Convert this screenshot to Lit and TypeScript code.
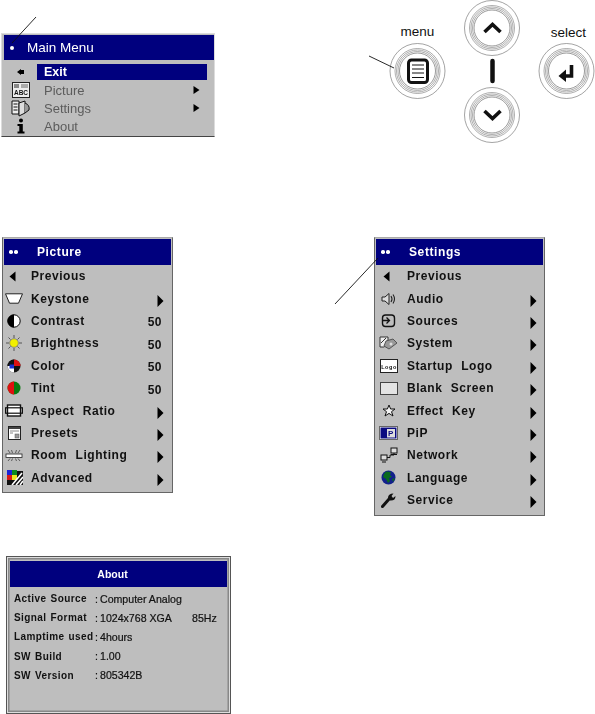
import { LitElement, html, css, svg } from "lit";
import { customElement } from "lit/decorators.js";

const ico = (w: number, h: number, body: unknown) =>
  html`<svg width=${w} height=${h} viewBox="0 0 ${w} ${h}">${body}</svg>`;

const icons: Record<string, unknown> = {
  back: ico(11, 11, svg`<path d="M6.500 .5V10.500L.5 5.500Z" fill="#000"/>`),
  backSmall: ico(8, 8, svg`<path d="M7 2V6H4V7L0 4L4 1V2Z" fill="#000"/>`),
  abc: ico(18, 16, svg`<rect x=".5" y=".5" width="17" height="15" fill="#eee" stroke="#222"/><rect x="2" y="2" width="5" height="4" fill="#888"/><rect x="9" y="2" width="7" height="4" fill="#aaa"/><text x="9" y="13" font-size="6.5" font-weight="700" text-anchor="middle" font-family="Liberation Sans" fill="#111">ABC</text>`),
  book: ico(20, 17, svg`<path d="M1 1H8V14H1Z" fill="#eee" stroke="#111"/><path d="M2.5 4H6.5M2.5 7H6.5M2.5 10H6.5" stroke="#111"/><path d="M8 3L14 1V13L8 16Z" fill="#ddd" stroke="#111"/><path d="M14 3Q19 5 18 10L14 13" fill="#999" stroke="#111"/>`),
  info: ico(10, 16, svg`<circle cx="5" cy="2.5" r="2" fill="#000"/><path d="M1.5 6H6.8V13.5H8.5V15.5H1.5V13.5H3.3V8H1.5Z" fill="#000"/>`),
  keystone: ico(18, 11, svg`<path d="M.5 .8H17.500L13.500 10.200H4.500Z" fill="#fff" stroke="#222"/>`),
  contrast: ico(14, 14, svg`<circle cx="7" cy="7" r="6.2" fill="#fff" stroke="#000"/><path d="M7 .5A6.5 6.5 0 0 0 7 13.5Z" fill="#000"/>`),
  bright: ico(18, 18, svg`<path d="M9 1V4M9 14V17M1 9H4M14 9H17M3.5 3.5L5.5 5.5M12.5 12.5L14.5 14.5M14.5 3.5L12.5 5.5M5.5 12.5L3.5 14.5" stroke="#555"/><circle cx="9" cy="9" r="4.3" fill="#f2f000" stroke="#666" stroke-width=".6"/>`),
  color: ico(14, 14, svg`<circle cx="7" cy="7" r="6.5" fill="#111"/><path d="M7 7V.5A6.5 6.5 0 0 1 13.5 7Z" fill="#d11"/><path d="M7 7H.5A6.5 6.5 0 0 1 7 .5Z" fill="#111"/><path d="M7 7V13.5A6.5 6.5 0 0 1 .5 7Z" fill="#fff"/><rect x="2.5" y="5.5" width="4.5" height="4" fill="#1a2fd0"/>`),
  tint: ico(14, 14, svg`<circle cx="7" cy="7" r="6.5" fill="#0a7a10"/><path d="M7 .5A6.5 6.5 0 0 0 7 13.5Z" fill="#e01010"/>`),
  aspect: ico(18, 13, svg`<rect x="2.5" y="1" width="13" height="11" fill="#fff" stroke="#111" stroke-width="1.4"/><rect x=".5" y="3.8" width="17" height="5.4" fill="none" stroke="#111" stroke-width="1.2"/>`),
  presets: ico(13, 14, svg`<rect x=".5" y=".5" width="12" height="13" fill="#fff" stroke="#222"/><rect x="1" y="1" width="11" height="2" fill="#444"/><path d="M2 5H11M2 7H5" stroke="#888"/><rect x="7" y="8" width="4" height="4" fill="#999" stroke="#555" stroke-width=".5"/>`),
  room: ico(18, 13, svg`<path d="M3 1L5 4M6.5 1L7.5 4M11.5 1L10.5 4M15 1L13 4M3 12L5 9.5M6.5 12L7.5 9.5M11.5 12L10.5 9.5M15 12L13 9.5" stroke="#444" stroke-width=".8"/><rect x="1" y="5" width="16" height="3.5" fill="#fff" stroke="#222" stroke-width=".8"/>`),
  advanced: ico(17, 15, svg`<rect width="5" height="5" x="1" y="0" fill="#1a22d8"/><rect width="5" height="5" x="6" y="0" fill="#0a8a20"/><rect width="5" height="5" x="1" y="5" fill="#d81818"/><rect width="5" height="5" x="6" y="5" fill="#ece820"/><rect x="11" y="1" width="6" height="14" fill="#111"/><rect x="1" y="10" width="16" height="5" fill="#111"/><path d="M6 15L16 3M10 15L17 7M14 15L17 11" stroke="#fff" stroke-width="1.6"/>`),
  audio: ico(16, 14, svg`<path d="M1 5H4L8 1.5V12.5L4 9H1Z" fill="#ddd" stroke="#222"/><path d="M10 4Q12 7 10 10M12 2.5Q15 7 12 11.500" fill="none" stroke="#222" stroke-width="1.1"/>`),
  sources: ico(15, 15, svg`<rect x="1.500" y="2" width="12" height="11.500" rx="3" fill="none" stroke="#111" stroke-width="1.4"/><path d="M1 7.500H8M5.500 4.500L8.500 7.500L5.500 10.500" fill="none" stroke="#111" stroke-width="1.3"/>`),
  system: ico(19, 14, svg`<path d="M1 1H9V8L5 11H1Z" fill="#eee" stroke="#333"/><path d="M2 7L7 2" stroke="#333"/><path d="M7 5L14 3L18 7L10 13L5 10Z" fill="#999" stroke="#555"/><circle cx="12" cy="8" r="1.500" fill="#ddd"/>`),
  logo: ico(18, 14, svg`<rect x=".5" y=".5" width="17" height="13" fill="#fff" stroke="#222"/><text x="9" y="9.500" font-size="5.500" text-anchor="middle" font-family="Liberation Sans" fill="#111">Logo</text>`),
  blank: ico(18, 13, svg`<rect x=".5" y=".5" width="17" height="12" fill="#e4e4e4" stroke="#444"/>`),
  star: ico(14, 13, svg`<path d="M7 1L8.600 5H13L9.500 7.700L11 12L7 9.400L3 12L4.500 7.700L1 5H5.400Z" fill="#f4f4f4" stroke="#111"/>`),
  pip: ico(19, 14, svg`<rect x=".5" y=".5" width="18" height="13" fill="#fff" stroke="#666"/><rect x="1.500" y="1.500" width="16" height="11" fill="#0a0a80"/><rect x="8" y="3" width="8" height="8.500" fill="#ddd"/><text x="12" y="10.300" font-size="8" font-weight="700" text-anchor="middle" font-family="Liberation Sans" fill="#0a0a80">P</text>`),
  net: ico(18, 16, svg`<rect x="1" y="8" width="6" height="5" fill="#ddd" stroke="#111"/><rect x="11" y="1" width="6" height="5" fill="#ddd" stroke="#111"/><path d="M7 10.500H10V8H14V6M2 15H6" fill="none" stroke="#111"/><path d="M11 7.500H17" stroke="#111"/>`),
  globe: ico(15, 15, svg`<circle cx="7.500" cy="7.500" r="7" fill="#12208c"/><path d="M5 1.500L10 2L9 5L11 7L8 8L9 11L7 13L5 9L2 7L3 4Z" fill="#0a6a20"/><path d="M11 9L14 8L12 12Z" fill="#0a6a20"/>`),
  wrench: ico(16, 16, svg`<path d="M1.500 14.500L8.500 6.500" stroke="#111" stroke-width="3" stroke-linecap="round"/><path d="M7 6Q7 1.500 12.500 1.500L10.500 4L12 6L14.500 4Q14.500 9 9 8.500Z" fill="#111"/>`),
};

type Row = { i: string; t: string; v?: string; a?: boolean };

const picture: Row[] = [
  { i: "back", t: "Previous" },
  { i: "keystone", t: "Keystone", a: true },
  { i: "contrast", t: "Contrast", v: "50" },
  { i: "bright", t: "Brightness", v: "50" },
  { i: "color", t: "Color", v: "50" },
  { i: "tint", t: "Tint", v: "50" },
  { i: "aspect", t: "Aspect Ratio", a: true },
  { i: "presets", t: "Presets", a: true },
  { i: "room", t: "Room Lighting", a: true },
  { i: "advanced", t: "Advanced", a: true },
];
const settings: Row[] = [
  { i: "back", t: "Previous" },
  { i: "audio", t: "Audio", a: true },
  { i: "sources", t: "Sources", a: true },
  { i: "system", t: "System", a: true },
  { i: "logo", t: "Startup Logo", a: true },
  { i: "blank", t: "Blank Screen", a: true },
  { i: "star", t: "Effect Key", a: true },
  { i: "pip", t: "PiP", a: true },
  { i: "net", t: "Network", a: true },
  { i: "globe", t: "Language", a: true },
  { i: "wrench", t: "Service", a: true },
];
const mainRows: Row[] = [
  { i: "backSmall", t: "Exit" },
  { i: "abc", t: "Picture", a: true },
  { i: "book", t: "Settings", a: true },
  { i: "info", t: "About" },
];
const about = [
  ["Active Source", "Computer Analog", ""],
  ["Signal Format", "1024x768 XGA", "85Hz"],
  ["Lamptime used", "4hours", ""],
  ["SW Build", "1.00", ""],
  ["SW Version", "805342B", ""],
];

const ring = (cx: number, cy: number) => svg`
  <circle cx=${cx} cy=${cy} r="27.500" fill="#fff" stroke="#666" stroke-width=".6"/>
  <circle cx=${cx} cy=${cy} r="22.500" fill="none" stroke="#777" stroke-width=".6"/>
  <circle cx=${cx} cy=${cy} r="21" fill="none" stroke="#777" stroke-width=".6"/>
  <circle cx=${cx} cy=${cy} r="19.500" fill="none" stroke="#777" stroke-width=".6"/>
  <circle cx=${cx} cy=${cy} r="18" fill="none" stroke="#555" stroke-width=".6"/>`;

const arrow = html`<svg class="arr" width="7" height="12" viewBox="0 0 7 12"><path d="M.5 0L6.500 6L.5 12Z" fill="#000"/></svg>`;
const smallArrow = html`<svg class="arr" width="7" height="8" viewBox="0 0 7 8"><path d="M.5 0L6.500 4L.5 8Z" fill="#000"/></svg>`;

@customElement("app-root")
export class AppRoot extends LitElement {
  static styles = css`
    :host { display: block; position: relative; width: 595px; height: 714px; background: #fff; overflow: hidden; font-family: "Liberation Sans", Arial, sans-serif; color: #000; }
    .top { display: flex; justify-content: space-between; height: 237px; }
    .main { margin: 33px 0 0 1px; width: 214px; height: 104px; box-sizing: border-box; background: #bebebe; border: 1px solid #dcdcdc; border-bottom-color: #444; padding: 1px 0 0 2px; filter: blur(.3px); }
    .main .title { height: 25px; background: #00007e; color: #fff; display: flex; align-items: center; font-size: 13.500px; }
    .main .dot { width: 4px; height: 4px; border-radius: 50%; background: #fff; margin: 0 13px 0 6px; }
    .mrows { padding-top: 3px; }
    .mrow { display: grid; grid-template-columns: 33px 170px; align-items: center; height: 18px; font-size: 13px; color: #5c5c5c; }
    .mrow .ic { display: flex; justify-content: center; align-items: center; padding-left: 1px; }
    .mrow .lab { display: flex; justify-content: space-between; align-items: center; padding: 0 7px; height: 16px; }
    .mrow.sel .lab { background: #00007e; color: #fff; font-weight: 700; font-size: 12.500px; }
    .keys { display: block; }
    .keys text { font-family: "Liberation Sans", Arial, sans-serif; font-size: 13.500px; fill: #111; }
    .mid { display: flex; justify-content: space-between; padding: 0 50px 0 2px; align-items: flex-start; height: 319px; }
    .sub { width: 171px; box-sizing: border-box; background: #bebebe; border: 1px solid #666; border-top-color: #aaa; padding: 1px 1px 4px 1px; filter: blur(.3px); }
    .sub.pic { height: 256px; }
    .sub.set { height: 279px; }
    .sub .title { height: 26px; background: #00007e; color: #fff; display: grid; grid-template-columns: 33px 1fr; align-items: center; font-size: 12px; font-weight: 700; letter-spacing: .6px; }
    .dots { display: flex; gap: 1.500px; padding-left: 5px; }
    .dots i { width: 3.500px; height: 3.500px; border-radius: 50%; background: #fff; }
    .row { display: grid; grid-template-columns: 27px 1fr auto; align-items: center; height: 22.400px; font-size: 12px; font-weight: 700; letter-spacing: .55px; word-spacing: 4.500px; color: #111; }
    .row .ic { display: flex; justify-content: center; align-items: center; padding-right: 7px; }
    .row .val { padding-right: 9px; letter-spacing: .5px; padding-top: 3px; }
    .row .arr { margin-right: 7px; margin-top: 4px; display: block; }
    .sub.set .row .arr { margin-right: 6px; }
    .sub.set .row { grid-template-columns: 31px 1fr auto; }
    .sub.set .row .ic { padding-right: 6px; }
    .about { margin-left: 6px; width: 225px; height: 158px; box-sizing: border-box; background: #bebebe; border: 1px solid #555; padding: 4px 3px 3px 3px; box-shadow: inset 0 0 0 1px #ddd, inset 0 0 0 2.500px #888; filter: blur(.3px); }
    .about .title { height: 26px; box-sizing: border-box; padding-right: 12px; background: #00007e; color: #fff; display: flex; align-items: center; justify-content: center; font-size: 10.500px; font-weight: 700; }
    .info { padding: 2px 0 0 4px; display: grid; grid-template-columns: 81px 5px 92px auto; grid-auto-rows: 19.200px; align-items: center; font-size: 10px; color: #111; }
    .info .k { font-weight: 700; letter-spacing: .4px; word-spacing: 1px; white-space: nowrap; }
    .info .v { font-size: 10.600px; font-weight: 400; -webkit-text-stroke: .2px #111; white-space: nowrap; }
    .lines { position: absolute; inset: 0; pointer-events: none; }
  `;

  private rows(rows: Row[]) {
    return rows.map(
      (r) => html`<div class="row">
        <span class="ic">${icons[r.i]}</span>
        <span>${r.t}</span>
        ${r.v ? html`<span class="val">${r.v}</span>` : r.a ? arrow : html`<span></span>`}
      </div>`
    );
  }

  render() {
    return html`
      <div class="top">
        <section class="main">
          <div class="title"><span class="dot"></span>Main Menu</div>
          <div class="mrows">
            ${mainRows.map(
              (r, i) => html`<div class="mrow ${i === 0 ? "sel" : ""}">
                <span class="ic">${icons[r.i]}</span>
                <span class="lab"><span>${r.t}</span>${r.a ? smallArrow : ""}</span>
              </div>`
            )}
          </div>
        </section>
        <svg class="keys" width="235" height="150" viewBox="360 0 235 150">
          ${ring(417.500, 71)}${ring(492, 28)}${ring(492, 115)}${ring(566.500, 71)}
          <text x="417.500" y="36" text-anchor="middle">menu</text>
          <text x="568.500" y="37" text-anchor="middle">select</text>
          <rect x="408.500" y="60" width="19" height="22.500" rx="3" fill="#fff" stroke="#111" stroke-width="3"/>
          <path d="M412 65H424M412 69H424M412 73H424M412 77.500H424" stroke="#111" stroke-width="1.100"/>
          <path d="M484.500 32L492.500 24.500L500.500 32M484.500 111L492.500 118.500L500.500 111" fill="none" stroke="#111" stroke-width="3.600"/>
          <path d="M492.500 61V81" stroke="#111" stroke-width="4.500" stroke-linecap="round"/>
          <path d="M571.500 65V76H564" fill="none" stroke="#111" stroke-width="3.600"/>
          <path d="M566 69.500V82L558.500 76Z" fill="#111"/>
        </svg>
      </div>
      <div class="mid">
        <section class="sub pic">
          <div class="title"><span class="dots"><i></i><i></i></span><span>Picture</span></div>
          ${this.rows(picture)}
        </section>
        <section class="sub set">
          <div class="title"><span class="dots"><i></i><i></i></span><span>Settings</span></div>
          ${this.rows(settings)}
        </section>
      </div>
      <section class="about">
        <div class="title">About</div>
        <div class="info">
          ${about.map(
            ([k, v, x]) => html`<span class="k">${k}</span><span class="v">:</span><span class="v">${v}</span><span class="v">${x}</span>`
          )}
        </div>
      </section>
      <svg class="lines" width="595" height="714" viewBox="0 0 595 714">
        <path d="M36 17L12 43M369 56L394 68M335 304L378 258" stroke="#111" fill="none" stroke-width=".9"/>
      </svg>
    `;
  }
}
